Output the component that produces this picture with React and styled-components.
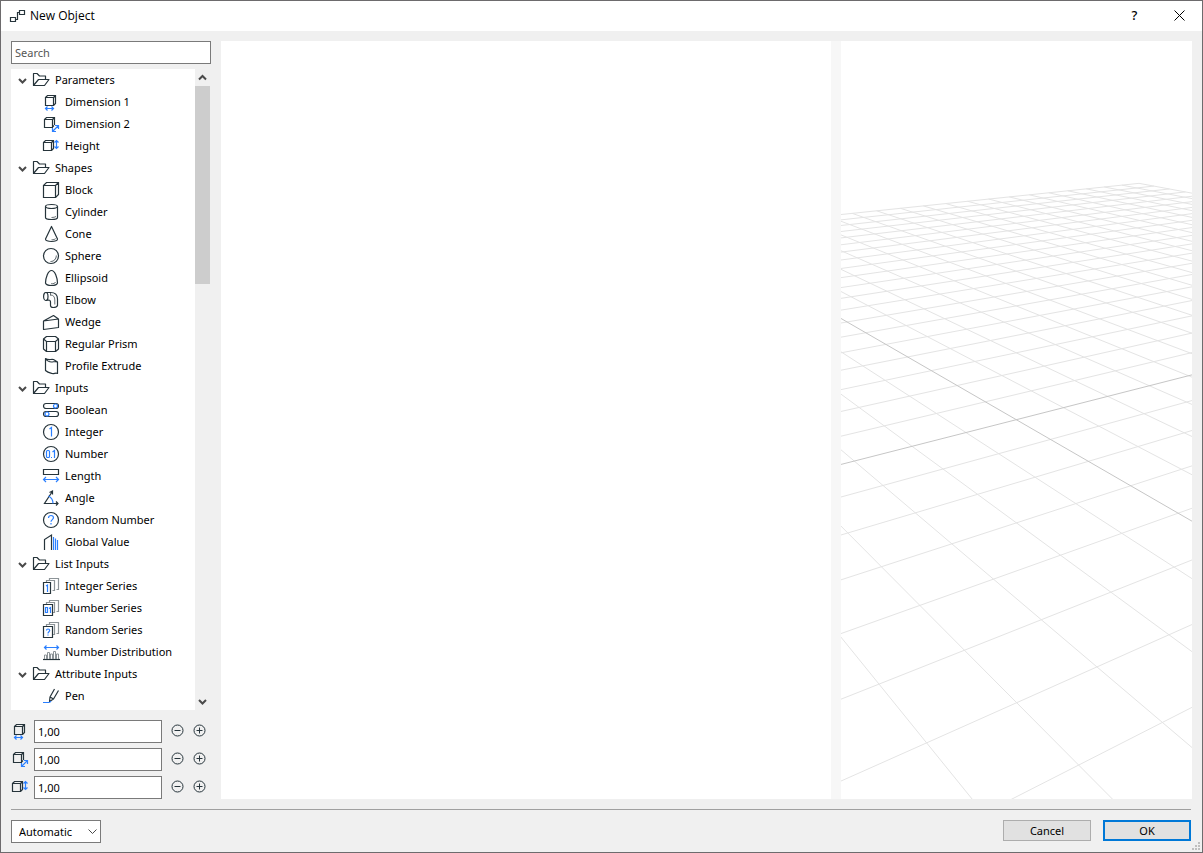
import React, { useState } from 'react'
import styled, { createGlobalStyle } from 'styled-components'

const INK = '#26343b'
const BLUE = '#2a7fff'

const GlobalStyle = createGlobalStyle`
    * {
        box-sizing: border-box;
    }
    body {
        margin: 0;
        background: #f0f0f0;
        color: #000;
        font-family: "Noto Sans", "Open Sans", sans-serif;
        font-size: 11px;
    }
    button, input, select {
        font: inherit;
        color: inherit;
    }
`

const Dialog = styled.div`
    position: relative;
    display: flex;
    flex-direction: column;
    height: 100vh;
    min-height: 400px;
    border: 1px solid #6d6b6d;
    background: #f0f0f0;
`
const TitleBar = styled.header`
    display: flex;
    align-items: center;
    height: 30px;
    padding-left: 8px;
    background: #fff;
`
const Title = styled.h1`
    flex: 1;
    margin: 0 0 0 3px;
    padding-bottom: 2px;
    font-family: "Open Sans", "Noto Sans", sans-serif;
    font-size: 12px;
    font-weight: 400;
`
const TitleButton = styled.button`
    display: flex;
    align-items: center;
    justify-content: center;
    width: 45px;
    height: 30px;
    padding: 0 0 2px;
    border: 0;
    background: none;
    font-size: 13px;
    font-weight: 500;
`
const Body = styled.main`
    display: flex;
    flex: 1;
    min-height: 0;
    padding: 10px;
`
const Sidebar = styled.aside`
    display: flex;
    flex-direction: column;
    width: 200px;
    margin-right: 10px;
`
const TextInput = styled.input`
    width: ${props => props.$width || '100%'};
    height: 23px;
    padding: 0 3px 1px;
    border: 1px solid #7a7a7a;
    border-radius: 0;
    background: #fff;
    outline: none;

    &::placeholder {
        color: #555;
        opacity: 1;
    }
`
const TreeBox = styled.div`
    display: flex;
    flex: 1;
    min-height: 0;
    margin: 5px 1px 10px 0;
`
const Tree = styled.ul`
    flex: 1;
    margin: 0;
    padding: 0;
    overflow: hidden;
    list-style: none;
    background: #fff;
`
const Group = styled.ul`
    margin: 0;
    padding: 0;
    list-style: none;
`
const Row = styled.button`
    display: flex;
    align-items: center;
    gap: 5px;
    width: 100%;
    height: 22px;
    padding: 0 0 0 ${props => (props.$nested ? '31px' : '7px')};
    border: 0;
    background: none;
    text-align: left;
    white-space: nowrap;
`
const RowLabel = styled.span`
    padding-bottom: 2px;
`
const ScrollBar = styled.div`
    display: flex;
    flex-direction: column;
    width: 15px;
`
const ScrollButton = styled.button`
    display: flex;
    align-items: center;
    justify-content: center;
    height: 17px;
    padding: 0;
    border: 0;
    background: none;
`
const ScrollTrack = styled.div`
    flex: 1;
`
const ScrollThumb = styled.div`
    height: 198px;
    max-height: 100%;
    background: #cdcdcd;
`
const Fields = styled.div`
    display: flex;
    flex-direction: column;
    gap: 5px;
`
const Field = styled.div`
    display: flex;
`
const FieldLabel = styled.label`
    display: flex;
    align-items: center;
    height: 22px;
    margin-right: 5px;
`
const Steppers = styled.div`
    display: flex;
    gap: 1px;
    margin-left: 5px;
`
const StepButton = styled.button`
    display: flex;
    width: 21px;
    height: 21px;
    padding: 4px;
    border: 0;
    background: none;
`
const Canvas = styled.section`
    flex: 1;
    background: #fff;
`
const Splitter = styled.div`
    width: 10px;
    background: #f7f7f7;
`
const Preview = styled.section`
    display: flex;
    width: 351px;
    background: #fff;
`
const Scene = styled.svg`
    width: 100%;
    height: 100%;
`
const Footer = styled.footer`
    display: flex;
    justify-content: space-between;
    margin: 0 11px 0 10px;
    padding: 10px 0 9px;
    border-top: 1px solid #a0a0a0;
`
const SelectBox = styled.div`
    display: grid;
    align-items: center;
    width: 90px;

    > * {
        grid-area: 1 / 1;
    }
    svg {
        justify-self: end;
        margin-right: 4px;
        pointer-events: none;
    }
`
const Select = styled.select`
    width: 100%;
    height: 23px;
    padding: 0 0 0 7px;
    border: 1px solid #7a7a7a;
    border-radius: 0;
    background: #fff;
    appearance: none;
`
const Actions = styled.div`
    display: flex;
    gap: 12px;
`
const ActionButton = styled.button`
    width: 88px;
    height: 21px;
    padding: 0;
    border: ${props => (props.$primary ? '2px solid #0078d7' : '1px solid #adadad')};
    background: #e1e1e1;
`
const Grip = styled.svg`
    position: absolute;
    right: 2px;
    bottom: 2px;
`

const Svg = ({ children, size = 18, color = INK, weight = 1.2 }) => (
    <svg
        width={size}
        height={size}
        viewBox={`0 0 ${size} ${size}`}
        fill="none"
        stroke={color}
        strokeWidth={weight}
        aria-hidden="true"
    >
        {children}
    </svg>
)

// stacked sheets shared by the three series icons
const Sheets = () => (
    <g stroke="#8d9498">
        <path d="M4.5 5V3.5h8v10h-2" />
        <path d="M7.5 3V1.5h9v11h-2" />
    </g>
)

const icons = {
    folder: <path d="M1.5 14.5v-12H5l2.5 2.5h6v3M1.5 14.5L6.500 8.500H17L12.500 14.500z" strokeLinejoin="round" />,
    dimension1: (
        <>
            <path d="M3.5 4.5h8v8h-8zM3.5 4.5l2-2h8v8l-2 2M11.5 4.5l2-2" />
            <path d="M3.5 15.5h8M5.5 13.5l-2 2 2 2M9.5 13.5l2 2-2 2" stroke={BLUE} />
        </>
    ),
    dimension2: (
        <>
            <path d="M2.5 4.5h8v8h-8zM2.5 4.5l2-2h8v7.5M10.5 4.5l2-2M10.5 12L12 10.5" />
            <path d="M10.5 16.5l6-6M10.5 13v3.5H14M13 10.5h3.5V14" stroke={BLUE} />
        </>
    ),
    height: (
        <>
            <path d="M1.5 5.5h8v8h-8zM1.5 5.5l2-2h8v8l-2 2M9.5 5.5l2-2" />
            <path d="M14.5 3.5v8M12.5 5.5l2-2 2 2M12.5 9.5l2 2 2-2" stroke={BLUE} />
        </>
    ),
    block: <path d="M1.5 4.5h12v12h-12zM1.5 4.5l3-3h12v12l-3 3M13.5 4.5l3-3" />,
    cylinder: (
        <>
            <ellipse cx="9.5" cy="3.5" rx="6" ry="2" />
            <path d="M3.5 3.5v11c0 1.2 2.7 2 6 2s6-.8 6-2v-11" />
            <path d="M9.5 14.5c2 0 3.5-.3 4.5-1" strokeWidth=".7" />
        </>
    ),
    cone: (
        <>
            <path d="M9.5 1.5L3.5 14c-.4 1.5 2.5 2.5 6 2.5s6.4-1 6-2.500z" strokeLinejoin="round" />
            <path d="M9.5 14.8c2 0 3.500-.4 4.200-1.300" strokeWidth=".7" />
        </>
    ),
    sphere: (
        <>
            <circle cx="9" cy="9" r="7.5" />
            <path d="M8.5 14.5c3.5 0 5.800-2.5 5.800-6" strokeWidth=".8" />
        </>
    ),
    ellipsoid: (
        <>
            <path d="M9.5 1.5C6 1.5 3.700 8.500 3.500 14c.5 1.700 3 2.500 6 2.500s5.500-.8 6-2.500c-.2-5.500-2.500-12.500-6-12.500z" />
            <path d="M9 14.8c2.5 0 4-.5 4.700-1.800" strokeWidth=".7" />
        </>
    ),
    elbow: (
        <>
            <ellipse cx="3.8" cy="5.5" rx="2.2" ry="4" />
            <path d="M3.8 1.5h4.700c4.500 0 7 2.500 7 6.500v6.500c-.5 1.400-2.500 2-4.300 2s-2.700-.8-2.700-2V11c0-1.500-.8-2-2-2l-2.700.5" />
            <path d="M8.5 4c3 0 4.300 2 4.300 5v4.500M8.5 2v2.500" strokeWidth=".7" />
        </>
    ),
    wedge: <path d="M1.5 8l15-2v8.500l-15 2zM1.500 8l10-5.500 5 3.500" strokeLinejoin="round" />,
    prism: (
        <>
            <path d="M1.5 4l3-2.500h9l3 2.500v10l-3 2.500h-9L1.500 14z" strokeLinejoin="round" />
            <path d="M1.5 4l3 2.500h9l3-2.500M4.500 6.500v10M13.500 6.500v10" />
        </>
    ),
    profile: (
        <path
            d="M3.5 1.5c3 2 5 .5 8 1l4 2.500v11.500c-2-1-3 .5-5.500 0-2-.5-4.500-1-6.500-3zM3.500 1.500c2 3 4 3.500 6 3.500s3.500-1 6 0"
            strokeLinejoin="round"
        />
    ),
    boolean: (
        <>
            <rect x="1.5" y="2.5" width="15" height="5" rx="2.5" />
            <rect x="1.5" y="10.5" width="15" height="5" rx="2.5" />
            <circle cx="13.5" cy="5" r="2" stroke={BLUE} fill="#fff" />
            <circle cx="5" cy="13" r="2" stroke={BLUE} fill="#fff" />
        </>
    ),
    integer: (
        <>
            <circle cx="9" cy="9" r="7.5" />
            <path d="M7.5 6l2-1.500V13.500" stroke={BLUE} />
        </>
    ),
    number: (
        <>
            <circle cx="9" cy="9" r="7.5" />
            <rect x="4.5" y="5.5" width="3" height="7" rx="1" stroke={BLUE} />
            <path d="M9 12.5h1M10.5 7l2-1.500v7.500" stroke={BLUE} />
        </>
    ),
    length: (
        <>
            <path d="M1.5 2.5h15v5h-15z" />
            <path d="M1.5 12.5h15M4 10l-2.5 2.500L4 15M14 10l2.500 2.500L14 15" stroke={BLUE} />
        </>
    ),
    angle: (
        <>
            <path d="M10 3L2.500 14.500H16M7.500 3.500L10.500 2v3.500M14 12.500l2 2-2 2" />
            <path d="M6.5 7c3 1.500 4.500 4 4.500 7.500" stroke={BLUE} />
        </>
    ),
    random: (
        <>
            <circle cx="9" cy="9" r="7.5" />
            <path d="M6.5 7c0-1.500 1-2.500 2.500-2.500s2.500 1 2.500 2.300c0 1.700-2.500 2-2.500 4M9 12v1.500" stroke={BLUE} />
        </>
    ),
    global: (
        <>
            <path d="M2.5 17V6.500l7-4.500v15" />
            <path d="M11.5 4v13M13.5 5.500V17M15.5 7v10" stroke={BLUE} />
        </>
    ),
    integerSeries: (
        <>
            <Sheets />
            <path d="M1.5 5.5h7v11h-7z" fill="#fff" />
            <path d="M4 9l1.5-1v7" stroke={BLUE} />
        </>
    ),
    numberSeries: (
        <>
            <Sheets />
            <path d="M1.5 5.5h9v11h-9z" fill="#fff" />
            <path d="M3.5 8.5h2v5h-2zM7 9.500l1.500-1V14" stroke={BLUE} />
        </>
    ),
    randomSeries: (
        <>
            <Sheets />
            <path d="M1.5 5.5h9v11h-9z" fill="#fff" />
            <path d="M4.5 9.500c0-1 .5-1.500 1.500-1.500s1.700.6 1.700 1.500c0 1.200-1.700 1.300-1.700 3M6 13.500v1" stroke={BLUE} />
        </>
    ),
    distribution: (
        <>
            <path d="M1 16.5h17" />
            <path
                d="M2.5 16v-4h2v4M5.500 16V9.500h2V16M8.500 16v-5h2v5M11.500 16V8.500h2V16M14.500 16v-5h2v5"
                stroke="#8d9498"
                strokeWidth="1"
            />
            <path d="M2.5 4.5h14M4.500 2.500l-2 2 2 2M14.500 2.500l2 2-2 2" stroke={BLUE} />
        </>
    ),
    pen: (
        <>
            <path d="M12.5 2L8 10l-.5 4.500L11.500 12l5-8.500M8 10l3.500 2" strokeLinejoin="round" />
            <path d="M1 15.500h6c1 0 1.500-.5 2-1.500" stroke={BLUE} />
        </>
    ),
}

const tree = [
    {
        name: 'Parameters',
        items: [
            ['Dimension 1', 'dimension1'],
            ['Dimension 2', 'dimension2'],
            ['Height', 'height'],
        ],
    },
    {
        name: 'Shapes',
        items: [
            ['Block', 'block'],
            ['Cylinder', 'cylinder'],
            ['Cone', 'cone'],
            ['Sphere', 'sphere'],
            ['Ellipsoid', 'ellipsoid'],
            ['Elbow', 'elbow'],
            ['Wedge', 'wedge'],
            ['Regular Prism', 'prism'],
            ['Profile Extrude', 'profile'],
        ],
    },
    {
        name: 'Inputs',
        items: [
            ['Boolean', 'boolean'],
            ['Integer', 'integer'],
            ['Number', 'number'],
            ['Length', 'length'],
            ['Angle', 'angle'],
            ['Random Number', 'random'],
            ['Global Value', 'global'],
        ],
    },
    {
        name: 'List Inputs',
        items: [
            ['Integer Series', 'integerSeries'],
            ['Number Series', 'numberSeries'],
            ['Random Series', 'randomSeries'],
            ['Number Distribution', 'distribution'],
        ],
    },
    {
        name: 'Attribute Inputs',
        items: [['Pen', 'pen']],
    },
]

const fields = [
    { id: 'dimension1', label: 'Dimension 1' },
    { id: 'dimension2', label: 'Dimension 2' },
    { id: 'height', label: 'Height' },
]

const Chevron = ({ up, thin }) => (
    <svg width="9" height="9" viewBox="0 0 9 9" fill="none" stroke="#4a4a4a" strokeWidth={thin ? 1 : 2} aria-hidden="true">
        <path d={up ? 'M1 6.5L4.5 3 8 6.5' : thin ? 'M.5 2.5l4 4 4-4' : 'M1 3l3.5 3.5L8 3'} />
    </svg>
)

// ground plane point (u, v) seen through the preview camera
const project = (u, v) => {
    const depth = 1 + 0.0328 * u - 0.0492 * v
    return [175.3 + (48.7 * u + 32.5 * v) / depth, 378.7 + (18.77 * v - 12.43 * u) / depth]
}

const GRID = 20

const gridLines = []
for (let i = -GRID; i <= GRID; i++) {
    // stop each line just before it runs behind the camera
    const nearV = Math.min(GRID, (0.95 + 0.0328 * i) / 0.0492)
    const nearU = Math.max(-GRID, (0.0492 * i - 0.95) / 0.0328)
    gridLines.push({ axis: i === 0, from: project(i, -GRID), to: project(i, nearV) })
    gridLines.push({ axis: i === 0, from: project(GRID, i), to: project(nearU, i) })
}
gridLines.sort((a, b) => a.axis - b.axis)

const GroundGrid = () => (
    <Scene viewBox="0 0 351 758" preserveAspectRatio="xMidYMid slice" role="img" aria-label="3D preview">
        {gridLines.map((line, i) => (
            <line
                key={i}
                x1={line.from[0]}
                y1={line.from[1]}
                x2={line.to[0]}
                y2={line.to[1]}
                stroke={line.axis ? '#c6c6c6' : '#e4e4e4'}
            />
        ))}
    </Scene>
)

const SizeField = ({ id, label }) => {
    const [value, setValue] = useState('1,00')
    const step = (delta) => {
        const next = parseFloat(value.replace(',', '.')) + delta
        setValue(next.toFixed(2).replace('.', ','))
    }

    return (
        <Field>
            <FieldLabel htmlFor={id} aria-label={label}>
                <Svg>{icons[id]}</Svg>
            </FieldLabel>
            <TextInput id={id} $width="128px" value={value} onChange={(e) => setValue(e.target.value)} />
            <Steppers>
                <StepButton aria-label="Decrease" onClick={() => step(-1)}>
                    <Svg size={13} weight={1}>
                        <circle cx="6.5" cy="6.5" r="5.5" />
                        <path d="M3.5 6.5h6" />
                    </Svg>
                </StepButton>
                <StepButton aria-label="Increase" onClick={() => step(1)}>
                    <Svg size={13} weight={1}>
                        <circle cx="6.5" cy="6.5" r="5.5" />
                        <path d="M3.5 6.5h6M6.5 3.5v6" />
                    </Svg>
                </StepButton>
            </Steppers>
        </Field>
    )
}

const App = () => {
    return (
        <>
            <GlobalStyle />
            <Dialog>
                <TitleBar>
                    <Svg>
                        <path d="M1.5 10.5h5v4h-5zM10.5 3.5h5v4h-5zM6.5 12.5h2v-7h2" />
                    </Svg>
                    <Title>New Object</Title>
                    <TitleButton aria-label="Help">?</TitleButton>
                    <TitleButton aria-label="Close">
                        <Svg size={11} color="#000" weight={1}>
                            <path d="M.5.5l10 10M10.5.5l-10 10" />
                        </Svg>
                    </TitleButton>
                </TitleBar>
                <Body>
                    <Sidebar>
                        <TextInput type="search" placeholder="Search" aria-label="Search" />
                        <TreeBox>
                            <Tree>
                                {tree.map((group) => (
                                    <li key={group.name}>
                                        <Row>
                                            <Chevron />
                                            <Svg>{icons.folder}</Svg>
                                            <RowLabel>{group.name}</RowLabel>
                                        </Row>
                                        <Group>
                                            {group.items.map(([name, icon]) => (
                                                <li key={name}>
                                                    <Row $nested>
                                                        <Svg>{icons[icon]}</Svg>
                                                        <RowLabel>{name}</RowLabel>
                                                    </Row>
                                                </li>
                                            ))}
                                        </Group>
                                    </li>
                                ))}
                            </Tree>
                            <ScrollBar>
                                <ScrollButton aria-label="Scroll up">
                                    <Chevron up />
                                </ScrollButton>
                                <ScrollTrack>
                                    <ScrollThumb />
                                </ScrollTrack>
                                <ScrollButton aria-label="Scroll down">
                                    <Chevron />
                                </ScrollButton>
                            </ScrollBar>
                        </TreeBox>
                        <Fields>
                            {fields.map((field) => (
                                <SizeField key={field.id} {...field} />
                            ))}
                        </Fields>
                    </Sidebar>
                    <Canvas />
                    <Splitter />
                    <Preview>
                        <GroundGrid />
                    </Preview>
                </Body>
                <Footer>
                    <SelectBox>
                        <Select aria-label="Update mode">
                            <option>Automatic</option>
                            <option>Manual</option>
                        </Select>
                        <Chevron thin />
                    </SelectBox>
                    <Actions>
                        <ActionButton>Cancel</ActionButton>
                        <ActionButton $primary>OK</ActionButton>
                    </Actions>
                </Footer>
                <Grip width="8" height="8" viewBox="0 0 8 8" fill="#bfbfbf" aria-hidden="true">
                    <path d="M6 0h2v2H6zM3 3h2v2H3zM6 3h2v2H6zM0 6h2v2H0zM3 6h2v2H3zM6 6h2v2H6z" />
                </Grip>
            </Dialog>
        </>
    )
}

export default App
